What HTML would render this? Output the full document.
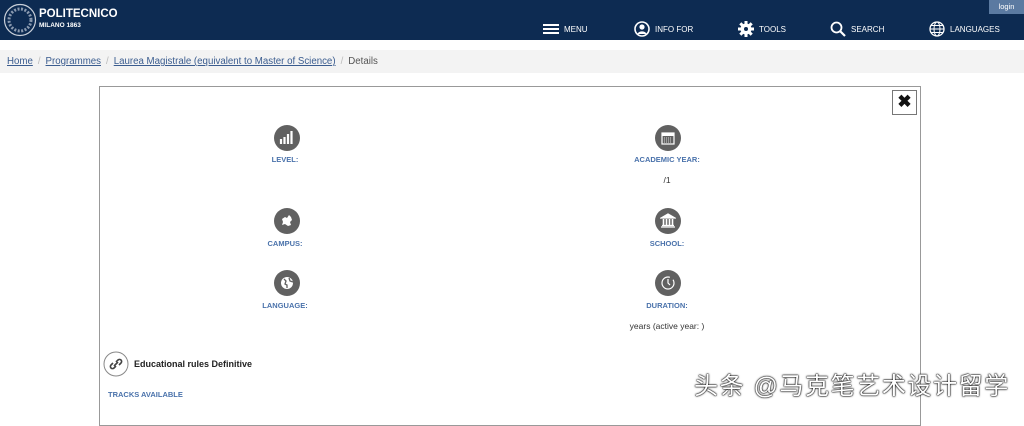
<!DOCTYPE html>
<html><head><meta charset="utf-8"><style>
*{margin:0;padding:0;box-sizing:border-box}
body{width:1024px;height:410px;overflow:hidden;background:#fff;font-family:"Liberation Sans",sans-serif;position:relative}
.hdr{position:absolute;left:0;top:0;width:1024px;height:40px;background:#0d2b52}
.abs{position:absolute}
.nav{color:#fff;font-size:8px;display:flex;align-items:center;gap:5px;top:20px;height:18px}
.bc{position:absolute;top:50px;left:0;width:1024px;height:23px;background:#f3f3f3;font-size:9.7px;color:#555;padding:6px 7px}
.bc a{color:#3a5c8f;text-decoration:underline}
.bc span.s{color:#bbb;margin:0 5px}
.box{position:absolute;left:99px;top:86px;width:822px;height:340px;border:1px solid #999}
.ic{position:absolute;width:26px;height:26px;border-radius:50%;background:#616161}
.lbl{position:absolute;width:200px;text-align:center;font-size:7.5px;font-weight:bold;color:#4a72ab}
.val{position:absolute;width:200px;text-align:center;font-size:8.5px;color:#333}
</style></head><body>
<div class="hdr"></div>
<svg class="abs" style="left:3px;top:3px" width="34" height="34"><circle cx="17" cy="17" r="15.5" fill="none" stroke="#c8cfd9" stroke-width="1.2"/><circle cx="17" cy="17" r="11" fill="none" stroke="#8a9ab0" stroke-width="3" stroke-dasharray="2 1.5"/></svg>
<div class="abs" style="left:39px;top:8px;color:#fff;font-weight:bold;font-size:11.5px">POLITECNICO</div>
<div class="abs" style="left:39px;top:22px;color:#fff;font-weight:bold;font-size:6.5px">MILANO 1863</div>
<div class="abs" style="left:989px;top:0;width:35px;height:14px;background:#5b7aa1;color:#fff;font-size:7.5px;text-align:center;line-height:13px">login</div>
<div class="abs nav" style="left:543px"><svg width="16" height="12"><path d="M0 2h16M0 6h16M0 10h16" stroke="#fff" stroke-width="2"/></svg>MENU</div>
<div class="abs nav" style="left:634px"><svg width="16" height="16"><circle cx="8" cy="8" r="7" fill="none" stroke="#fff" stroke-width="1.6"/><circle cx="8" cy="6" r="2.6" fill="#fff"/><path d="M3.5 13c1-3.5 8-3.5 9 0" fill="#fff"/></svg>INFO FOR</div>
<div class="abs nav" style="left:738px"><svg width="16" height="16"><circle cx="8" cy="8" r="5.5" fill="#fff"/><path d="M8 0v16M0 8h16M2.3 2.3l11.4 11.4M13.7 2.3L2.3 13.7" stroke="#fff" stroke-width="3"/><circle cx="8" cy="8" r="2" fill="#0d2b52"/></svg>TOOLS</div>
<div class="abs nav" style="left:830px"><svg width="16" height="16"><circle cx="6.5" cy="6.5" r="5" fill="none" stroke="#fff" stroke-width="1.8"/><path d="M10 10l5 5" stroke="#fff" stroke-width="2.2"/></svg>SEARCH</div>
<div class="abs nav" style="left:929px"><svg width="16" height="16"><circle cx="8" cy="8" r="7" fill="none" stroke="#fff" stroke-width="1.3"/><ellipse cx="8" cy="8" rx="3" ry="7" fill="none" stroke="#fff" stroke-width="1"/><path d="M1 8h14M2 4.5h12M2 11.5h12" stroke="#fff" stroke-width="1"/></svg>LANGUAGES</div>
<div class="bc"><a>Home</a><span class="s">/</span><a>Programmes</a><span class="s">/</span><a>Laurea Magistrale (equivalent to Master of Science)</a><span class="s">/</span>Details</div>
<div class="box"></div>
<div class="abs" style="left:892px;top:90px;width:25px;height:25px;border:1.5px solid #777;text-align:center;font-size:17px;line-height:22px;font-weight:bold;color:#111">✖</div>
<div class="ic" style="left:274px;top:125px"></div>
<svg class="abs" style="left:279px;top:129px" width="16" height="16"><path d="M2 15V10M5.5 15V8M9 15V5M12.5 15V2" stroke="#fff" stroke-width="2.2"/></svg>
<div class="lbl" style="left:185px;top:155px">LEVEL:</div>
<div class="ic" style="left:655px;top:125px"></div>
<svg class="abs" style="left:661px;top:131px" width="14" height="14"><rect x="1" y="2" width="12" height="11" fill="none" stroke="#fff" stroke-width="1.2"/><rect x="1" y="2" width="12" height="3" fill="#fff"/><path d="M3 7h8M3 9h8M3 11h8" stroke="#fff" stroke-width="0.8" stroke-dasharray="1 1"/></svg>
<div class="lbl" style="left:567px;top:155px">ACADEMIC YEAR:</div>
<div class="val" style="left:567px;top:175px">/1</div>
<div class="ic" style="left:274px;top:208px"></div>
<svg class="abs" style="left:279px;top:213px" width="16" height="16"><path d="M3 6l3-2 2 1 2-3 2 2 1 3-2 2 1 3-3 1-3-2-3 1 1-3z" fill="#fff"/></svg>
<div class="lbl" style="left:185px;top:239px">CAMPUS:</div>
<div class="ic" style="left:655px;top:208px"></div>
<svg class="abs" style="left:660px;top:213px" width="16" height="16"><path d="M1 5L8 1l7 4zM1 14h14M2 12.5h12" stroke="#fff" fill="#fff" stroke-width="1.2"/><path d="M3.5 6v6M6.5 6v6M9.5 6v6M12.5 6v6" stroke="#fff" stroke-width="1.6"/></svg>
<div class="lbl" style="left:567px;top:239px">SCHOOL:</div>
<div class="ic" style="left:274px;top:270px"></div>
<svg class="abs" style="left:280px;top:276px" width="14" height="14"><circle cx="7" cy="7" r="6" fill="#fff"/><path d="M4 3l2 2-1 3 2 1 0 3M9 2l1 3 3 1" stroke="#616161" stroke-width="1.3" fill="none"/></svg>
<div class="lbl" style="left:185px;top:301px">LANGUAGE:</div>
<div class="ic" style="left:655px;top:270px"></div>
<svg class="abs" style="left:660px;top:275px" width="16" height="16"><circle cx="8" cy="8" r="6" fill="none" stroke="#fff" stroke-width="1.2" stroke-dasharray="30 4"/><path d="M8 4v4l2 2" stroke="#fff" stroke-width="1.2" fill="none"/></svg>
<div class="lbl" style="left:567px;top:301px">DURATION:</div>
<div class="val" style="left:567px;top:321px">years (active year: )</div>
<svg class="abs" style="left:103px;top:351px" width="26" height="26"><circle cx="13" cy="13" r="12" fill="#fff" stroke="#888" stroke-width="1"/><path d="M11 15l4-4M10 12l-2 2a2 2 0 0 0 3 3l2-2M16 14l2-2a2 2 0 0 0-3-3l-2 2" stroke="#444" stroke-width="1.6" fill="none"/></svg>
<div class="abs" style="left:134px;top:359px;font-size:9px;font-weight:bold;color:#222">Educational rules Definitive</div>
<div class="abs" style="left:108px;top:390px;font-size:7.5px;font-weight:bold;color:#4a72ab">TRACKS AVAILABLE</div>
<div class="abs" style="left:694px;top:366px;font-size:24px;letter-spacing:1.6px;color:#fff;font-family:'Liberation Sans','Noto Sans CJK SC',sans-serif;text-shadow:0 0 2px #000,0 0 1px #000,0 0 1px #000">头条 @马克笔艺术设计留学</div>
</body></html>
